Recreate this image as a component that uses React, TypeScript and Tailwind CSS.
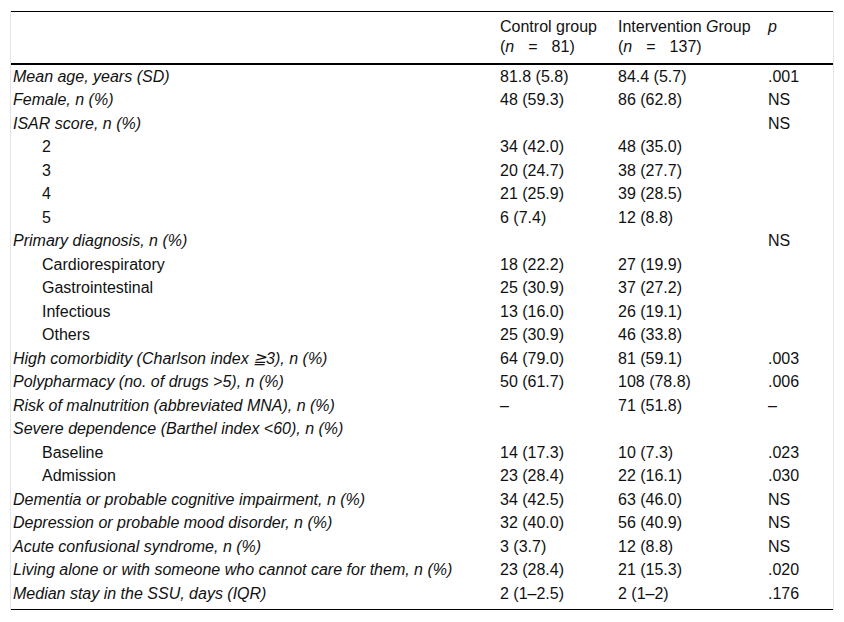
type Row = {
  label: string
  control?: string
  intervention?: string
  p?: string
  sub?: boolean
}

const rows: Row[] = [
  { label: 'Mean age, years (SD)', control: '81.8 (5.8)', intervention: '84.4 (5.7)', p: '.001' },
  { label: 'Female, n (%)', control: '48 (59.3)', intervention: '86 (62.8)', p: 'NS' },
  { label: 'ISAR score, n (%)', p: 'NS' },
  { label: '2', control: '34 (42.0)', intervention: '48 (35.0)', sub: true },
  { label: '3', control: '20 (24.7)', intervention: '38 (27.7)', sub: true },
  { label: '4', control: '21 (25.9)', intervention: '39 (28.5)', sub: true },
  { label: '5', control: '6 (7.4)', intervention: '12 (8.8)', sub: true },
  { label: 'Primary diagnosis, n (%)', p: 'NS' },
  { label: 'Cardiorespiratory', control: '18 (22.2)', intervention: '27 (19.9)', sub: true },
  { label: 'Gastrointestinal', control: '25 (30.9)', intervention: '37 (27.2)', sub: true },
  { label: 'Infectious', control: '13 (16.0)', intervention: '26 (19.1)', sub: true },
  { label: 'Others', control: '25 (30.9)', intervention: '46 (33.8)', sub: true },
  { label: 'High comorbidity (Charlson index ≧3), n (%)', control: '64 (79.0)', intervention: '81 (59.1)', p: '.003' },
  { label: 'Polypharmacy (no. of drugs >5), n (%)', control: '50 (61.7)', intervention: '108 (78.8)', p: '.006' },
  { label: 'Risk of malnutrition (abbreviated MNA), n (%)', control: '–', intervention: '71 (51.8)', p: '–' },
  { label: 'Severe dependence (Barthel index <60), n (%)' },
  { label: 'Baseline', control: '14 (17.3)', intervention: '10 (7.3)', p: '.023', sub: true },
  { label: 'Admission', control: '23 (28.4)', intervention: '22 (16.1)', p: '.030', sub: true },
  { label: 'Dementia or probable cognitive impairment, n (%)', control: '34 (42.5)', intervention: '63 (46.0)', p: 'NS' },
  { label: 'Depression or probable mood disorder, n (%)', control: '32 (40.0)', intervention: '56 (40.9)', p: 'NS' },
  { label: 'Acute confusional syndrome, n (%)', control: '3 (3.7)', intervention: '12 (8.8)', p: 'NS' },
  { label: 'Living alone or with someone who cannot care for them, n (%)', control: '23 (28.4)', intervention: '21 (15.3)', p: '.020' },
  { label: 'Median stay in the SSU, days (IQR)', control: '2 (1–2.5)', intervention: '2 (1–2)', p: '.176' },
]

const grid = 'grid grid-cols-[486px_118px_150px_1fr]'

export default function App() {
  return (
    <div className="min-h-[622px] bg-white pt-[11px] text-[16px] text-[#111] font-['Liberation_Sans',Arial,sans-serif]">
      <div className="ml-[10px] w-[824px] border-x border-[#e4e4e4]">
        <div className={`${grid} border-t border-black pt-[5px] pb-[6px] leading-5`}>
          <div />
          <div className="pl-[3px]">
            <div>Control group</div>
            <div>
              (<i>n</i>
              <span className="mx-[14px]">=</span>81)
            </div>
          </div>
          <div className="pl-[3px]">
            <div>
              Intervention <i>G</i>roup
            </div>
            <div>
              (<i>n</i>
              <span className="mx-[14px]">=</span>137)
            </div>
          </div>
          <div className="pl-[3px]">
            <i>p</i>
          </div>
        </div>
        <div className="border-t-2 border-black pb-[3.5px] border-b">
          {rows.map((row) => (
            <div key={row.label} className={`${grid} h-[23.5px] items-center leading-5`}>
              <div className={row.sub ? 'pl-[31px]' : 'pl-[2px] italic'}>{row.label}</div>
              <div className="pl-[3px]">{row.control}</div>
              <div className="pl-[3px]">{row.intervention}</div>
              <div className="pl-[3px]">{row.p}</div>
            </div>
          ))}
        </div>
      </div>
    </div>
  )
}
